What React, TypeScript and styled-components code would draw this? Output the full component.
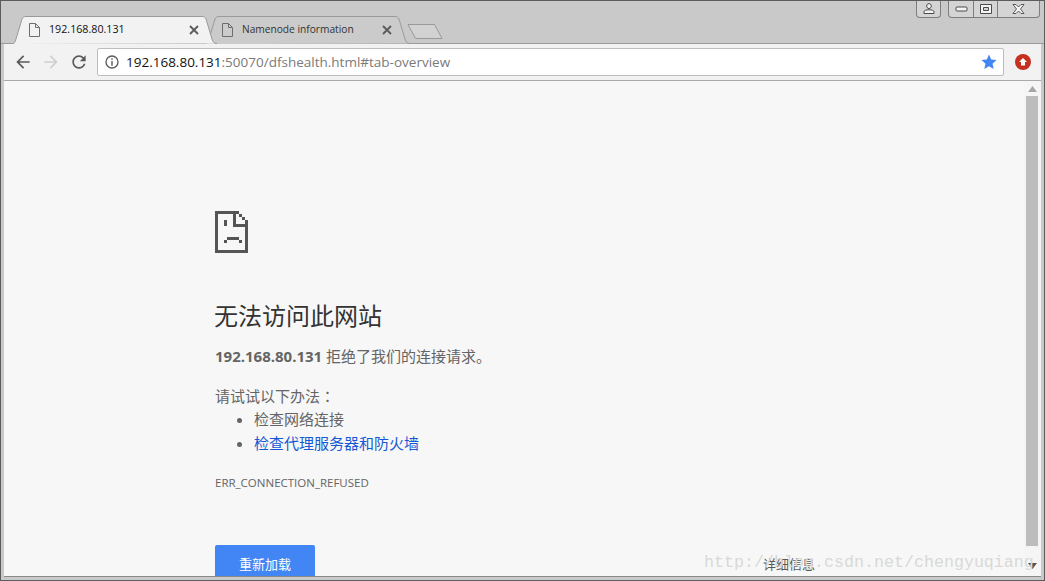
import React from 'react'
import styled, { createGlobalStyle } from 'styled-components'

const GlobalStyle = createGlobalStyle`
  html, body {
    margin: 0;
    padding: 0;
    background: #c9c9c9;
  }
  * {
    box-sizing: border-box;
  }
`

const uiFont = `'Open Sans', 'Noto Sans CJK SC', sans-serif`

const Window = styled.div`
  position: relative;
  width: 1045px;
  height: 581px;
  display: flex;
  flex-direction: column;
  overflow: hidden;
  background: #c9c9c9;
  border: 1px solid #5c5c5c;
  padding: 0 3px 3px 3px;
  font-family: ${uiFont};
`

const TabStrip = styled.div`
  height: 43px;
  flex: none;
  display: flex;
  justify-content: space-between;
  align-items: flex-start;
  margin: 0 -3px;
  padding-right: 4px;
  border-bottom: 1px solid #9c9c9c;
`

const Tabs = styled.div`
  display: flex;
  align-items: flex-start;
  padding: 14px 0 0 11px;
`

const TabShell = styled.div<{ $active?: boolean }>`
  position: relative;
  width: 205px;
  height: 29px;
  flex: none;
  margin-right: -12px;
  z-index: ${(p) => (p.$active ? 2 : 1)};
  display: flex;
  align-items: center;
  padding: 0 18px 0 17px;
  color: ${(p) => (p.$active ? '#111' : '#333')};
  font-size: ${(p) => (p.$active ? '10.7px' : '10.2px')};
`

const TabShape = styled.svg`
  position: absolute;
  inset: 0;
`

const TabIcon = styled.svg`
  position: relative;
  flex: none;
  margin-right: 9px;
`

const TabTitle = styled.span`
  position: relative;
  flex: 1;
  padding-bottom: 2px;
  white-space: nowrap;
`

const TabClose = styled.svg`
  position: relative;
  flex: none;
`

const NewTab = styled.svg`
  flex: none;
  margin: 8px 0 0 9px;
`

const WindowControls = styled.div`
  display: flex;
  gap: 7px;
  margin-top: -1px;
`

const ControlGroup = styled.div`
  display: flex;
  height: 18px;
  background: #d4d4d4;
  border: 1px solid #7d7d7d;
  border-top: none;
  border-radius: 0 0 4px 4px;
`

const ControlButton = styled.div<{ $width: number }>`
  width: ${(p) => p.$width}px;
  display: flex;
  align-items: center;
  justify-content: center;
  border-right: 1px solid #7d7d7d;
  &:last-child {
    border-right: none;
  }
`

const Toolbar = styled.div`
  height: 37px;
  flex: none;
  display: flex;
  align-items: center;
  background: #f2f2f2;
  border-bottom: 1px solid #a9a9a9;
  padding-left: 5px;
`

const NavButton = styled.div`
  width: 28px;
  height: 24px;
  flex: none;
  display: flex;
  align-items: center;
  justify-content: center;
`

const NavGroup = styled.div`
  display: flex;
  margin-right: 4px;
`

const Omnibox = styled.div`
  width: 907px;
  height: 28px;
  flex: none;
  display: flex;
  align-items: center;
  background: #fff;
  border: 1px solid #bdbdbd;
  border-radius: 2px;
  padding: 0 6px 0 7px;
`

const Url = styled.div`
  flex: 1;
  margin-left: 7px;
  font-size: 13.5px;
  color: #7a7a7a;
  white-space: nowrap;
`

const Host = styled.span`
  color: #111;
`

const ExtensionSlot = styled.div`
  flex: 1;
  display: flex;
  justify-content: center;
`

const Viewport = styled.div`
  position: relative;
  flex: 1;
  min-height: 0;
  display: flex;
  background: #f7f7f7;
  overflow: hidden;
  border-bottom: 1px solid #8a8a8a;
`

const Page = styled.main`
  flex: 1;
  min-width: 0;
  padding: 130px 0 0 211px;
  color: #646464;
  font-size: 15px;
`

const Column = styled.div`
  width: 600px;
`

const SadFile = styled.svg`
  display: block;
  margin-bottom: 44px;
`

const Heading = styled.h1`
  margin: 0 0 9px -1px;
  font-size: 24px;
  line-height: 38px;
  font-weight: 400;
  color: #333;
`

const Summary = styled.p`
  margin: 0 0 16px;
  line-height: 24px;
`

const SuggestionsIntro = styled.p`
  margin: 0 0 -1px;
  line-height: 24px;
`

const CenteredColon = styled.span`
  font-family: 'Noto Sans CJK TC', sans-serif;
`

const Suggestions = styled.ul`
  margin: 0;
  padding-left: 39px;
  line-height: 24px;
`

const Suggestion = styled.li`
  &::marker {
    color: #646464;
  }
`

const SuggestionLink = styled.a`
  color: #1558d6;
  text-decoration: none;
`

const ErrorCode = styled.div`
  margin-top: 19px;
  font-size: 11.5px;
  line-height: 18px;
  color: #646464;
`

const Actions = styled.div`
  margin-top: 53px;
  display: flex;
  justify-content: space-between;
  align-items: center;
`

const ReloadButton = styled.button`
  width: 100px;
  height: 38px;
  padding: 0 0 2px;
  border: none;
  border-radius: 2px;
  background: #4285f4;
  color: #fff;
  font-family: ${uiFont};
  font-size: 13px;
`

const DetailsButton = styled.button`
  padding: 0 0 2px;
  border: none;
  background: none;
  color: #5a5a5a;
  font-family: ${uiFont};
  font-size: 13px;
`

const Scrollbar = styled.div`
  width: 17px;
  flex: none;
  display: flex;
  flex-direction: column;
  align-items: center;
  background: #f5f5f5;
  padding: 5px 1px 0 0;
`

const ScrollThumb = styled.div`
  width: 12px;
  height: 450px;
  margin-top: 4px;
  background: #bcbcbc;
`

const ScrollArrowDown = styled.svg`
  margin-top: 17px;
`

const Watermark = styled.div`
  position: absolute;
  left: 700px;
  top: 472px;
  font-family: 'Liberation Mono', monospace;
  font-size: 16.67px;
  line-height: 20px;
  color: #d9d9d6;
  white-space: nowrap;
  pointer-events: none;
`

const FileGlyph = () => (
  <TabIcon width="11" height="14" viewBox="0 0 11 14">
    <path d="M.5.5h6l4 4v9H.5zM6.5.5v4h4" fill="none" stroke="#6e6e6e" />
  </TabIcon>
)

const CloseGlyph = () => (
  <TabClose width="10" height="10" viewBox="0 0 10 10">
    <path d="M1 1l8 8M9 1L1 9" stroke="#5a5a5a" strokeWidth="1.8" />
  </TabClose>
)

const Tab = ({ title, active }: { title: string; active?: boolean }) => (
  <TabShell $active={active}>
    <TabShape width="205" height="29" viewBox="0 0 205 29">
      <path
        d="M.5 29 C2 29 3 27 4 24 L10 4 C11 2 12 1.500 14 1.500 H190 C192 1.500 193 2 194 4 L200 24 C201 27 202 28.500 205 28.500"
        fill={active ? '#f2f2f2' : '#cbcbcb'}
        stroke="#9a9a9a"
      />
    </TabShape>
    <FileGlyph />
    <TabTitle>{title}</TabTitle>
    <CloseGlyph />
  </TabShell>
)

export default function App() {
  return (
    <>
      <GlobalStyle />
      <Window>
        <TabStrip>
          <Tabs>
            <Tab title="192.168.80.131" active />
            <Tab title="Namenode information" />
            <NewTab width="36" height="17" viewBox="0 0 36 17">
              <path d="M1 1.500H27.500L35 15.500H8.500Z" fill="#d2d2d2" stroke="#9a9a9a" strokeLinejoin="round" />
            </NewTab>
          </Tabs>
          <WindowControls>
            <ControlGroup>
              <ControlButton $width={23}>
                <svg width="12" height="11" viewBox="0 0 12 11">
                  <path d="M6 .7c1.500 0 2.300 1 2.300 2.300S7.500 5.500 6 5.500 3.700 4.400 3.700 3 4.500.7 6 .7zM1 10.500V8.800c0-1.300 2-2 5-2s5 .7 5 2v1.700z" fill="#f4f4f4" stroke="#4a4a4a" />
                </svg>
              </ControlButton>
            </ControlGroup>
            <ControlGroup>
              <ControlButton $width={25}>
                <svg width="13" height="6" viewBox="0 0 13 6">
                  <rect x="1" y="1" width="11" height="4" rx="1" fill="#f4f4f4" stroke="#4a4a4a" />
                </svg>
              </ControlButton>
              <ControlButton $width={24}>
                <svg width="12" height="10" viewBox="0 0 12 10">
                  <path d="M.5.500h11v9H.5z" fill="#f4f4f4" stroke="#4a4a4a" />
                  <path d="M3.500 3.500h5v3h-5z" fill="#d4d4d4" stroke="#4a4a4a" />
                </svg>
              </ControlButton>
              <ControlButton $width={41}>
                <svg width="13" height="10" viewBox="0 0 13 10">
                  <path d="M1 .500h3l2.500 2.500L9 .500h3L8.500 5 12 9.500H9L6.500 7 4 9.500H1L4.500 5z" fill="#f4f4f4" stroke="#4a4a4a" strokeWidth=".9" />
                </svg>
              </ControlButton>
            </ControlGroup>
          </WindowControls>
        </TabStrip>
        <Toolbar>
          <NavGroup>
            <NavButton>
              <svg width="20" height="20" viewBox="0 0 24 24" fill="#5a5a5a">
                <path d="M20 11H7.830l5.590-5.590L12 4l-8 8 8 8 1.410-1.410L7.830 13H20v-2z" />
              </svg>
            </NavButton>
            <NavButton>
              <svg width="20" height="20" viewBox="0 0 24 24" fill="#cfcfcf">
                <path d="M12 4l-1.410 1.410L16.170 11H4v2h12.170l-5.580 5.590L12 20l8-8z" />
              </svg>
            </NavButton>
            <NavButton>
              <svg width="20" height="20" viewBox="0 0 24 24" fill="#5a5a5a">
                <path d="M17.650 6.350C16.200 4.900 14.210 4 12 4c-4.420 0-7.990 3.580-7.990 8s3.570 8 7.990 8c3.730 0 6.840-2.550 7.730-6h-2.080c-.82 2.330-3.040 4-5.650 4-3.310 0-6-2.690-6-6s2.690-6 6-6c1.660 0 3.140.69 4.220 1.780L13 11h7V4l-2.350 2.350z" />
              </svg>
            </NavButton>
          </NavGroup>
          <Omnibox>
            <svg width="14" height="14" viewBox="0 0 14 14" style={{ flex: 'none' }}>
              <circle cx="7" cy="7" r="6" fill="none" stroke="#5a5a5a" strokeWidth="1.300" />
              <path d="M6.300 3.300h1.400v1.400H6.300zM6.300 6h1.400v4.700H6.300z" fill="#5a5a5a" />
            </svg>
            <Url>
              <Host>192.168.80.131</Host>:50070/dfshealth.html#tab-overview
            </Url>
            <svg width="16" height="16" viewBox="0 0 16 16" style={{ flex: 'none' }}>
              <path d="M8 .6l2.200 5 5.300.5-4 3.600 1.200 5.300L8 12.200 3.300 15l1.200-5.300-4-3.600 5.300-.5z" fill="#4285f4" />
            </svg>
          </Omnibox>
          <ExtensionSlot>
            <svg width="16" height="16" viewBox="0 0 16 16">
              <circle cx="8" cy="8" r="8" fill="#c5301f" />
              <path d="M8 4L12 8H10v3.500H6V8H4z" fill="#fff" />
            </svg>
          </ExtensionSlot>
        </Toolbar>
        <Viewport>
          <Page>
            <Column>
              <SadFile width="33" height="42" viewBox="0 0 33 42" fill="#555">
                <path d="M0 0h24v3H3v36h27V15h3v27H0zM18 3h3v10h12v3H18zM24 3h3v3h-3zM27 6h3v3h-3zM30 9h3v6h-3zM9 9h3v6H9zM12 26h12v3H12zM9 29h3v3H9zM24 29h3v3h-3z" />
              </SadFile>
              <Heading>无法访问此网站</Heading>
              <Summary>
                <strong>192.168.80.131</strong> 拒绝了我们的连接请求。
              </Summary>
              <SuggestionsIntro>
                请试试以下办法<CenteredColon>：</CenteredColon>
              </SuggestionsIntro>
              <Suggestions>
                <Suggestion>检查网络连接</Suggestion>
                <Suggestion>
                  <SuggestionLink href="#">检查代理服务器和防火墙</SuggestionLink>
                </Suggestion>
              </Suggestions>
              <ErrorCode>ERR_CONNECTION_REFUSED</ErrorCode>
              <Actions>
                <ReloadButton>重新加载</ReloadButton>
                <DetailsButton>详细信息</DetailsButton>
              </Actions>
            </Column>
          </Page>
          <Scrollbar>
            <svg width="9" height="6" viewBox="0 0 9 6">
              <path d="M4.500 0L9 6H0z" fill="#a6a6a6" />
            </svg>
            <ScrollThumb />
            <ScrollArrowDown width="9" height="6" viewBox="0 0 9 6">
              <path d="M0 0h9L4.500 6z" fill="#555" />
            </ScrollArrowDown>
          </Scrollbar>
          <Watermark>http://blog.csdn.net/chengyuqiang</Watermark>
        </Viewport>
      </Window>
    </>
  )
}
